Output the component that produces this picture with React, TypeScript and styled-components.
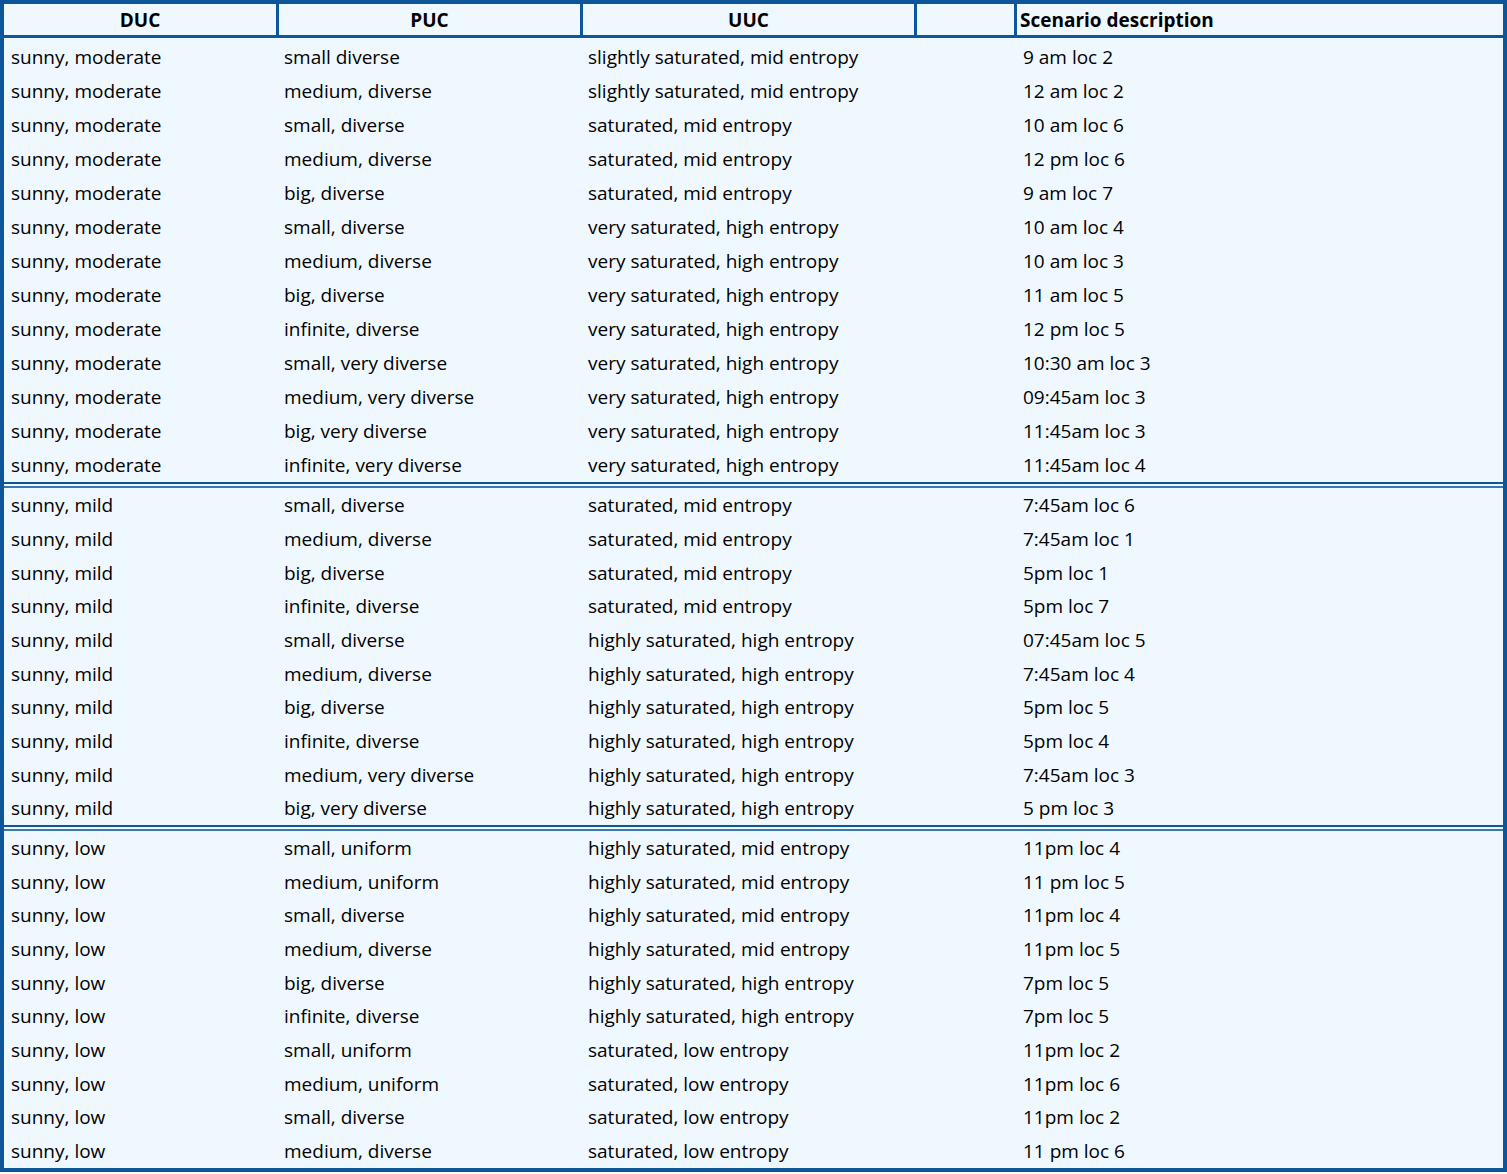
import React from "react";
import styled, { createGlobalStyle } from "styled-components";

const Global = createGlobalStyle`
  html, body { margin: 0; padding: 0; background: #fff; }
  body { font-family: "Open Sans", "Noto Sans", sans-serif; color: #000; }
`;

const Table = styled.div`
  width: 1507px;
  height: 1172px;
  box-sizing: border-box;
  border: 4px solid #0d5699;
  background: #f0f8ff;
  display: flex;
  flex-direction: column;
`;

const cols = "275px 304px 334px 100px 1fr";

const Header = styled.div`
  display: grid;
  grid-template-columns: ${cols};
  height: 31px;
  border-bottom: 3px solid #0d5699;
`;

const HCell = styled.div<{ $left?: boolean; $last?: boolean }>`
  border-right: ${(p) => (p.$last ? "none" : "3px solid #0d5699")};
  font-weight: 700;
  font-size: 19px;
  line-height: 33px;
  text-align: ${(p) => (p.$left ? "left" : "center")};
  padding-left: ${(p) => (p.$left ? "3px" : "0")};
  overflow: hidden;
  white-space: nowrap;
`;

const Section = styled.div<{ $n: number; $sep?: boolean }>`
  display: grid;
  grid-template-columns: ${cols};
  grid-auto-rows: 1fr;
  flex: ${(p) => p.$n};
  border-top: ${(p) => (p.$sep ? "2px solid #0d5699" : "none")};
  box-shadow: ${(p) => (p.$sep ? "inset 0 2px 0 #f0f8ff, inset 0 4px 0 #3a78b0" : "none")};
  padding-top: ${(p) => (p.$sep ? "4px" : "2px")};
`;

const Cell = styled.div<{ $span?: boolean; $pad: number }>`
  grid-column: ${(p) => (p.$span ? "span 2" : "auto")};
  padding-left: ${(p) => p.$pad}px;
  font-size: 19px;
  display: flex;
  align-items: center;
  white-space: nowrap;
`;

type Row = [string, string, string, string];

const s1: Row[] = [
  ["sunny, moderate", "small diverse", "slightly saturated, mid entropy", "9 am loc 2"],
  ["sunny, moderate", "medium, diverse", "slightly saturated, mid entropy", "12 am loc 2"],
  ["sunny, moderate", "small, diverse", "saturated, mid entropy", "10 am loc 6"],
  ["sunny, moderate", "medium, diverse", "saturated, mid entropy", "12 pm loc 6"],
  ["sunny, moderate", "big, diverse", "saturated, mid entropy", "9 am loc 7"],
  ["sunny, moderate", "small, diverse", "very saturated, high entropy", "10 am loc 4"],
  ["sunny, moderate", "medium, diverse", "very saturated, high entropy", "10 am loc 3"],
  ["sunny, moderate", "big, diverse", "very saturated, high entropy", "11 am loc 5"],
  ["sunny, moderate", "infinite, diverse", "very saturated, high entropy", "12 pm loc 5"],
  ["sunny, moderate", "small, very diverse", "very saturated, high entropy", "10:30 am loc 3"],
  ["sunny, moderate", "medium, very diverse", "very saturated, high entropy", "09:45am loc 3"],
  ["sunny, moderate", "big, very diverse", "very saturated, high entropy", "11:45am loc 3"],
  ["sunny, moderate", "infinite, very diverse", "very saturated, high entropy", "11:45am loc 4"],
];
const s2: Row[] = [
  ["sunny, mild", "small, diverse", "saturated, mid entropy", "7:45am loc 6"],
  ["sunny, mild", "medium, diverse", "saturated, mid entropy", "7:45am loc 1"],
  ["sunny, mild", "big, diverse", "saturated, mid entropy", "5pm loc 1"],
  ["sunny, mild", "infinite, diverse", "saturated, mid entropy", "5pm loc 7"],
  ["sunny, mild", "small, diverse", "highly saturated, high entropy", "07:45am loc 5"],
  ["sunny, mild", "medium, diverse", "highly saturated, high entropy", "7:45am loc 4"],
  ["sunny, mild", "big, diverse", "highly saturated, high entropy", "5pm loc 5"],
  ["sunny, mild", "infinite, diverse", "highly saturated, high entropy", "5pm loc 4"],
  ["sunny, mild", "medium, very diverse", "highly saturated, high entropy", "7:45am loc 3"],
  ["sunny, mild", "big, very diverse", "highly saturated, high entropy", "5 pm loc 3"],
];
const s3: Row[] = [
  ["sunny, low", "small, uniform", "highly saturated, mid entropy", "11pm loc 4"],
  ["sunny, low", "medium, uniform", "highly saturated, mid entropy", "11 pm loc 5"],
  ["sunny, low", "small, diverse", "highly saturated, mid entropy", "11pm loc 4"],
  ["sunny, low", "medium, diverse", "highly saturated, mid entropy", "11pm loc 5"],
  ["sunny, low", "big, diverse", "highly saturated, high entropy", "7pm loc 5"],
  ["sunny, low", "infinite, diverse", "highly saturated, high entropy", "7pm loc 5"],
  ["sunny, low", "small, uniform", "saturated, low entropy", "11pm loc 2"],
  ["sunny, low", "medium, uniform", "saturated, low entropy", "11pm loc 6"],
  ["sunny, low", "small, diverse", "saturated, low entropy", "11pm loc 2"],
  ["sunny, low", "medium, diverse", "saturated, low entropy", "11 pm loc 6"],
];

const renderRows = (rows: Row[]) =>
  rows.map((r, i) => (
    <React.Fragment key={i}>
      <Cell $pad={7}>{r[0]}</Cell>
      <Cell $pad={5}>{r[1]}</Cell>
      <Cell $pad={5} $span>{r[2]}</Cell>
      <Cell $pad={6}>{r[3]}</Cell>
    </React.Fragment>
  ));

export default function App() {
  return (
    <>
      <Global />
      <Table>
        <Header>
          <HCell>DUC</HCell>
          <HCell>PUC</HCell>
          <HCell>UUC</HCell>
          <HCell />
          <HCell $left $last>Scenario description</HCell>
        </Header>
        <Section $n={13.4}>{renderRows(s1)}</Section>
        <Section $n={10.2} $sep>{renderRows(s2)}</Section>
        <Section $n={10.2} $sep>{renderRows(s3)}</Section>
      </Table>
    </>
  );
}
